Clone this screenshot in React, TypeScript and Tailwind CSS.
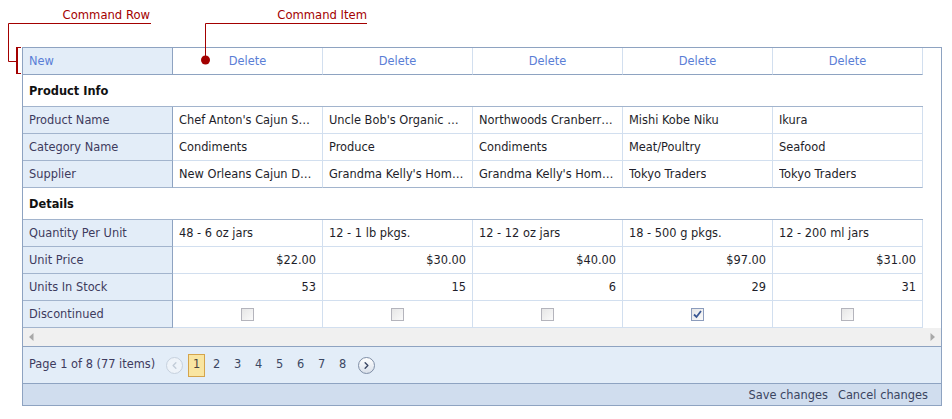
import { ChevronLeft, ChevronRight } from 'lucide-react';

type Product = {
  name: string;
  category: string;
  supplier: string;
  qty: string;
  price: string;
  stock: number;
  discontinued: boolean;
};

const products: Product[] = [
  { name: "Chef Anton's Cajun Seasoning", category: 'Condiments', supplier: 'New Orleans Cajun Delights', qty: '48 - 6 oz jars', price: '$22.00', stock: 53, discontinued: false },
  { name: "Uncle Bob's Organic Dried Pears", category: 'Produce', supplier: "Grandma Kelly's Homestead", qty: '12 - 1 lb pkgs.', price: '$30.00', stock: 15, discontinued: false },
  { name: 'Northwoods Cranberry Sauce', category: 'Condiments', supplier: "Grandma Kelly's Homestead", qty: '12 - 12 oz jars', price: '$40.00', stock: 6, discontinued: false },
  { name: 'Mishi Kobe Niku', category: 'Meat/Poultry', supplier: 'Tokyo Traders', qty: '18 - 500 g pkgs.', price: '$97.00', stock: 29, discontinued: true },
  { name: 'Ikura', category: 'Seafood', supplier: 'Tokyo Traders', qty: '12 - 200 ml jars', price: '$31.00', stock: 31, discontinued: false },
];

function Checkbox({ checked }: { checked: boolean }) {
  return (
    <div
      className={`w-[13px] h-[13px] border bg-gradient-to-br from-[#e6e6e6] to-[#fafafa] flex items-center justify-center ${
        checked ? 'border-[#8c9cbc]' : 'border-[#b4b4bc]'
      }`}
    >
      {checked && (
        <svg width="9" height="9" viewBox="0 0 9 9">
          <path d="M1 4.5 L3.5 7 L8 1" fill="none" stroke="#3a5793" strokeWidth="1.8" />
        </svg>
      )}
    </div>
  );
}

function Row({
  label,
  cells,
  align = 'left',
  dark = false,
}: {
  label: string;
  cells: React.ReactNode[];
  align?: 'left' | 'right' | 'center';
  dark?: boolean;
}) {
  const justify = align === 'right' ? 'justify-end' : align === 'center' ? 'justify-center' : 'justify-start';
  return (
    <div className="flex h-[27px]">
      <div className="w-[150px] shrink-0 bg-[#e3edf8] border-r border-r-[#8ea3c1] border-b border-b-[#a2b4cd] px-[6px] pt-[1px] flex items-center text-[#3e3b5e]">
        {label}
      </div>
      {cells.map((c, i) => (
        <div
          key={i}
          className={`w-[150px] shrink-0 border-r border-r-[#d2dfef] border-b px-[6px] pt-[1px] flex items-center ${justify} text-[#1e1e2a] ${
            dark ? 'border-b-[#a2b4cd]' : 'border-b-[#d2dfef]'
          }`}
        >
          {typeof c === 'string' ? <span className="truncate">{c}</span> : c}
        </div>
      ))}
    </div>
  );
}

function Section({ title }: { title: string }) {
  return (
    <div className="h-[32px] border-b border-b-[#a2b4cd] px-[6px] pt-[3px] flex items-center font-bold text-[#111]">
      {title}
    </div>
  );
}

export default function App() {
  return (
    <div className="relative w-[952px] h-[419px] bg-white font-['DejaVu_Sans',sans-serif] text-[11.4px] overflow-hidden">
      {/* Callouts */}
      <svg className="absolute left-0 top-0 pointer-events-none" width="952" height="419">
        <g fill="none" stroke="#a30000" strokeWidth="1">
          <path d="M151 23.5 H8.5 V61.5 H16" />
          <path d="M367 23.5 H205.5 V58" />
        </g>
        <rect x="16" y="47" width="2" height="27" fill="#a30000" />
        <rect x="16" y="47" width="5" height="1" fill="#a30000" />
        <rect x="16" y="73" width="5" height="1" fill="#a30000" />
        <circle cx="205.5" cy="60" r="4.5" fill="#a30000" />
      </svg>
      <span className="absolute top-[7px] right-[802px] text-[11.6px] leading-[16px] text-[#a30000]">Command Row</span>
      <span className="absolute top-[7px] right-[585px] text-[11.6px] leading-[16px] text-[#a30000]">Command Item</span>

      <div className="pt-[47px] pl-[22px]">
        <div className="w-[920px] border border-[#8ea3c1] flex flex-col">
          <div className="flex">
            <div className="w-[900px] shrink-0">
              {/* Command row */}
              <div className="flex h-[27px]">
                <div className="w-[150px] shrink-0 bg-[#e3edf8] border-r border-r-[#8ea3c1] border-b border-b-[#8ea3c1] px-[6px] pt-[1px] flex items-center text-[#5a7ed6]">
                  New
                </div>
                {products.map((p) => (
                  <div
                    key={p.name}
                    className="w-[150px] shrink-0 border-r border-r-[#d2dfef] border-b border-b-[#8ea3c1] pt-[1px] flex items-center justify-center text-[#5a7ed6]"
                  >
                    Delete
                  </div>
                ))}
              </div>

              <Section title="Product Info" />
              <Row label="Product Name" cells={products.map((p) => p.name)} />
              <Row label="Category Name" cells={products.map((p) => p.category)} />
              <Row label="Supplier" cells={products.map((p) => p.supplier)} dark />

              <Section title="Details" />
              <Row label="Quantity Per Unit" cells={products.map((p) => p.qty)} />
              <Row label="Unit Price" cells={products.map((p) => p.price)} align="right" />
              <Row label="Units In Stock" cells={products.map((p) => String(p.stock))} align="right" />
              <Row
                label="Discontinued"
                cells={products.map((p) => <Checkbox key={p.name} checked={p.discontinued} />)}
                align="center"
              />
            </div>
            <div className="flex-1 bg-white" />
          </div>

          {/* Horizontal scrollbar */}
          <div className="h-[18px] bg-[#f0f0f0] flex items-center justify-between px-[6px]">
            <svg width="5" height="8" viewBox="0 0 5 8">
              <path d="M4.5 0 V8 L0 4 Z" fill="#a8a8a8" />
            </svg>
            <svg width="5" height="8" viewBox="0 0 5 8">
              <path d="M0.5 0 V8 L5 4 Z" fill="#a8a8a8" />
            </svg>
          </div>

          {/* Pager */}
          <div className="h-[37px] border-t border-t-[#8ea3c1] bg-[#e3edf8] flex items-center pl-[6px] text-[#3e3b5e]">
            <span>Page 1 of 8 (77 items)</span>
            <div className="ml-[11px] w-[17px] h-[17px] rounded-full border border-[#c6d1de] bg-[#eef3f9] flex items-center justify-center text-[#c2ccd8]">
              <ChevronLeft size={11} strokeWidth={3} />
            </div>
            <div className="ml-[5px] w-[17px] h-[23px] border border-[#d4a44c] bg-[#f9e5a1] flex items-center justify-center text-[#4a4440]">
              1
            </div>
            <div className="ml-[1px] flex">
              {[2, 3, 4, 5, 6, 7, 8].map((n) => (
                <div key={n} className="w-[21px] h-[23px] flex items-center justify-center text-[#3b4763]">
                  {n}
                </div>
              ))}
            </div>
            <div className="ml-[5px] w-[17px] h-[17px] rounded-full border border-[#7f8ea6] bg-gradient-to-b from-white to-[#d9e0ea] flex items-center justify-center text-[#3b4763]">
              <ChevronRight size={11} strokeWidth={3} />
            </div>
          </div>

          {/* Status bar */}
          <div className="h-[22px] border-t border-t-[#8ea3c1] bg-[#d0ddee] pt-[2px] flex items-center justify-end gap-[10px] pr-[13px] text-[#3b4561]">
            <span>Save changes</span>
            <span>Cancel changes</span>
          </div>
        </div>
      </div>
    </div>
  );
}
